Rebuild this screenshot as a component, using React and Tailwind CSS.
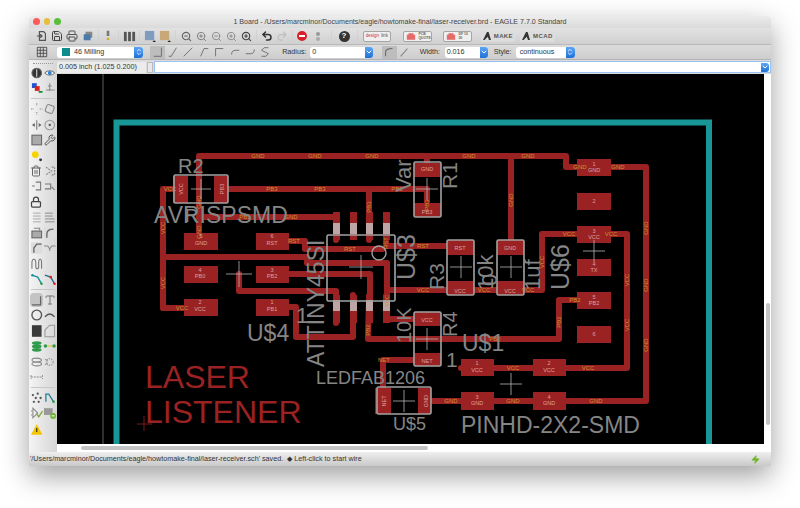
import React from 'react';
import { Printer, Save, Undo2, Redo2, ZoomIn, ZoomOut, Lock, Wrench, Type, Zap, Trash2, ChevronDown, ChevronsUpDown } from 'lucide-react';

const RED = '#9b2222';
const GREY = '#858585';
const OUTLINE = '#a3a3a3';
const ORANGE = '#c9952c';
const PADTEXT = '#d9a3a3';

// copper runs, in screen coordinates
const traces = [
  '199,240 199,156 566,156 566,167 580,167',
  '608,167 646,167 646,401 431,401',
  '163,308 163,189 176,189',
  '163,308 190,308',
  '228,189 427,189 427,210',
  '369,189 369,240',
  '427,156 427,170',
  '511,156 511,245',
  '199,217 336,217 336,240',
  '163,257 307,257 307,263 387,263 387,296',
  '285,241 305,241 305,249 383,249',
  '386,225 386,246 450,246',
  '387,290 542,290 542,234 627,234 627,368 461,368',
  '289,274 370,274 370,296',
  '239,274 239,291 336,291 336,323',
  '289,307 296,307 296,337 353,337 353,295',
  '369,296 368,339 559,339 559,300 580,300',
  '386,296 386,319 416,319',
  '383,388 383,360 416,360',
];

const pads = [
  [173, 176, 15, 27], [214, 176, 14, 27],
  [414, 163, 27, 14], [414, 203, 27, 14],
  [447, 240, 27, 15], [447, 281, 27, 14],
  [497, 240, 27, 15], [497, 281, 27, 14],
  [414, 312, 27, 14], [414, 353, 27, 13],
  [375, 388, 16, 26], [418, 388, 13, 26],
  [184, 233, 34, 17], [256, 233, 33, 17],
  [184, 266, 34, 17], [256, 266, 33, 17],
  [184, 299, 34, 17], [256, 299, 33, 17],
  [577, 159, 34, 17], [577, 193, 34, 17], [577, 226, 34, 17], [577, 259, 34, 17], [577, 292, 34, 17], [577, 326, 34, 17],
  [461, 359, 33, 17], [533, 359, 33, 17], [461, 392, 33, 18], [533, 392, 33, 18],
];

const pins = [
  [333, 212], [350, 212], [366, 212], [383, 212],
  [333, 295], [350, 295], [366, 295], [383, 295],
];

const outlines = [
  [174, 175, 54, 28], [414, 162, 27, 55], [447, 240, 27, 55], [497, 240, 27, 55],
  [414, 312, 27, 54], [377, 387, 54, 27], [327, 235, 68, 66],
];

const crosses = [
  [201, 189, 10], [427, 189, 11], [361, 267, 12], [461, 267, 11], [511, 267, 11], [594, 251, 11],
  [239, 274, 13], [427, 339, 11], [404, 401, 11], [511, 384, 11],
];

// text on copper
const netLabels = [
  [258, 158, 'GND'], [315, 158, 'GND'], [372, 158, 'GND'], [469, 158, 'GND'], [528, 158, 'GND'],
  [580, 169, 'GND'], [618, 169, 'GND'], [170, 191, 'VCC'], [272, 191, 'PB3'], [320, 191, 'PB3'], [397, 191, 'PB3'],
  [245, 219, 'PB3'], [291, 219, 'GND'], [294, 243, 'RST'], [350, 251, 'RST'], [423, 248, 'RST'],
  [423, 292, 'VCC'], [484, 292, 'VCC'], [528, 292, 'VCC'], [569, 236, 'VCC'], [611, 236, 'VCC'], [182, 310, 'VCC'],
  [513, 370, 'VCC'], [588, 370, 'VCC'], [513, 403, 'GND'], [451, 403, 'GND'], [596, 403, 'GND'], [384, 362, 'NET'],
  [495, 341, 'PB2'], [575, 302, 'PB2'],
];
const netLabelsV = [
  [165, 283, 'VCC'], [165, 228, 'VCC'], [201, 232, 'GND'], [201, 202, 'GND'], [371, 207, 'PB3'], [429, 205, 'PB3'],
  [513, 200, 'GND'], [544, 262, 'VCC'], [629, 280, 'VCC'], [648, 228, 'GND'], [648, 285, 'GND'], [648, 345, 'GND'], [629, 325, 'VCC'],
  [561, 322, 'PB2'], [370, 330, 'PB2'], [389, 301, 'VCC'], [388, 243, 'RST'],
];
const padLabels = [
  [201, 238, '5'], [201, 245, 'GND'], [272, 238, '6'], [272, 245, 'RST'], [200, 272, '4'], [200, 278, 'PB0'], [272, 272, '3'], [272, 278, 'PB2'],
  [200, 304, '2'], [200, 311, 'VCC'], [272, 304, '1'], [272, 311, 'PB1'],
  [594, 166, '1'], [594, 172, 'GND'], [594, 203, '2'], [594, 233, '3'], [594, 239, 'VCC'], [594, 266, '4'], [594, 272, 'TX'],
  [594, 299, '5'], [594, 305, 'PB2'], [594, 336, '6'],
  [477, 365, '1'], [477, 372, 'VCC'], [549, 365, '2'], [549, 372, 'VCC'], [477, 399, '3'], [477, 405, 'GND'], [549, 399, '4'], [549, 405, 'GND'],
  [427, 171, 'GND'], [427, 214, 'PB3'], [460, 250, 'RST'], [460, 293, 'VCC'], [510, 250, 'GND'], [510, 293, 'VCC'], [427, 322, 'VCC'], [427, 363, 'NET'],
];
const padLabelsV = [
  [183, 189, 'VCC'], [224, 189, 'PB3'], [386, 401, 'NET'], [428, 401, 'GND'],
];

// package names, rotated ones have r = -90
const names = [
  [178, 173, 20, 0, 'R2'], [154, 223, 23, 0, 'AVRISPSMD'], [185, 222, 18, 0, 'R'], [247, 341, 23, 0, 'U$4'], [296, 323, 22, 0, '1'],
  [316, 384, 18, 0, 'LEDFAB1206'], [462, 351, 23, 0, 'U$1'], [446, 367, 21, 0, '1'], [393, 430, 18, 0, 'U$5'], [461, 433, 23, 0, 'PINHD-2X2-SMD'],
  [411, 192, 22, -90, 'Var'], [457, 189, 21, -90, 'R1'], [415, 280, 25, -90, 'U$3'], [444, 290, 21, -90, 'R3'],
  [493, 290, 22, -90, '10k'], [497, 286, 22, -90, '0'], [540, 290, 22, -90, '1uf'], [569, 290, 25, -90, 'U$6'],
  [324, 367, 23, -90, 'ATTINY45SI'], [411, 343, 20, -90, '10K'], [457, 337, 20, -90, 'R4'],
];

function Board() {
  return (
    <svg viewBox="57 74 707 370" className="block w-[707px] h-[370px] bg-black" fontFamily="Liberation Sans, sans-serif">
      <path d="M116.5 444V122.5H709V444" fill="none" stroke="#199797" strokeWidth="6" />
      <path d="M103 74V444" stroke="#5e5e5e" strokeWidth="1" />

      {traces.map((t) => (
        <polyline key={t} points={t} fill="none" stroke={RED} strokeWidth="6" strokeLinejoin="round" strokeLinecap="round" />
      ))}
      {pads.map(([x, y, w, h]) => (
        <rect key={`${x}-${y}`} x={x} y={y} width={w} height={h} fill={RED} />
      ))}
      {pins.map(([x, y]) => (
        <g key={`${x}-${y}`}>
          <rect x={x} y={y} width="7" height="28" fill={RED} />
          <rect x={x} y={y === 212 ? 223 : 300} width="7" height="11" fill="#bfa6a6" />
        </g>
      ))}

      {netLabels.map(([x, y, t]) => (
        <text key={`${x}-${y}`} x={x} y={y} fontSize="6" fill={ORANGE} textAnchor="middle">{t}</text>
      ))}
      {netLabelsV.map(([x, y, t]) => (
        <text key={`${x}-${y}`} x={x} y={y} fontSize="6" fill={ORANGE} textAnchor="middle" transform={`rotate(-90 ${x} ${y})`}>{t}</text>
      ))}
      {padLabels.map(([x, y, t]) => (
        <text key={`${x}-${y}-${t}`} x={x} y={y} fontSize="5.5" fill={PADTEXT} textAnchor="middle">{t}</text>
      ))}
      {padLabelsV.map(([x, y, t]) => (
        <text key={`${x}-${y}`} x={x} y={y} fontSize="5.5" fill={PADTEXT} textAnchor="middle" transform={`rotate(-90 ${x} ${y})`}>{t}</text>
      ))}

      {outlines.map(([x, y, w, h]) => (
        <rect key={`${x}-${y}`} x={x} y={y} width={w} height={h} rx="1.5" fill="none" stroke={OUTLINE} strokeWidth="1.6" />
      ))}
      <circle cx="379" cy="253" r="7" fill="none" stroke={OUTLINE} strokeWidth="1.4" />
      {crosses.map(([x, y, s]) => (
        <path key={`${x}-${y}`} d={`M${x - s} ${y}H${x + s}M${x} ${y - s}V${y + s}`} stroke="#b5b5b5" strokeWidth="0.8" />
      ))}

      {names.map(([x, y, s, r, t]) => (
        <text key={t + x} x={x} y={y} fontSize={s} fill={GREY} transform={r ? `rotate(${r} ${x} ${y})` : undefined}>{t}</text>
      ))}

      <text x="145" y="388" fontSize="32" fill={RED}>LASER</text>
      <text x="145" y="423" fontSize="32" fill={RED}>LISTENER</text>
      <path d="M137 424H152M144 416V431" stroke={RED} strokeWidth="0.8" />
    </svg>
  );
}

// little hand drawn glyphs for the EAGLE tool buttons
const I = ({ children, size = 14 }) => (
  <svg viewBox="0 0 14 14" width={size} height={size} fill="none" stroke="#666" strokeWidth="1.1">{children}</svg>
);

const sideIcons = {
  info: <I><circle cx="7" cy="7" r="5" fill="#333" /><path d="M7 3v8" stroke="#ddd" /></I>,
  eye: <I><path d="M2 7c2-3 8-3 10 0-2 3-8 3-10 0z" fill="#fff" stroke="#777" /><circle cx="7" cy="7" r="2" fill="#2b7fd4" stroke="none" /></I>,
  layers: <I><rect x="2" y="2" width="5" height="5" fill="#2255cc" stroke="none" /><rect x="5" y="5" width="5" height="5" fill="#d22" stroke="none" /><path d="M9 11h4" stroke="#183" strokeWidth="2" /></I>,
  mark: <I><path d="M7 2v8M3 9h9M5 5h4" stroke="#888" /></I>,
  move: <I><path d="M7 1v3M7 10v3M1 7h3M10 7h3" stroke="#888" strokeDasharray="1.5 1" /></I>,
  rotate: <I><rect x="3" y="3" width="8" height="8" rx="2" transform="rotate(20 7 7)" stroke="#888" /></I>,
  mirror: <I><path d="M7 2v10" stroke="#777" /><path d="M5 5v4L2 7zM9 5v4l3-2z" fill="#666" stroke="none" /></I>,
  target: <I><circle cx="7" cy="7" r="5" stroke="#999" /><circle cx="7" cy="7" r="1.2" fill="#555" stroke="none" /></I>,
  square: <I><rect x="2" y="2" width="10" height="10" fill="#aaa" stroke="#666" /></I>,
  wrench: <Wrench size={12} color="#555" />,
  yellow: <I><circle cx="5.5" cy="5.5" r="3.5" fill="#f5d400" stroke="none" /><circle cx="11" cy="11" r="1.5" fill="#333" stroke="none" /></I>,
  trash: <Trash2 size={12} color="#666" />,
  cut: <I><path d="M3 3l6 4-6 4M9 3h3v8H9" stroke="#888" strokeDasharray="2 1" /></I>,
  copy: <I><path d="M2 7h3M6 3h5v8H6" stroke="#777" /></I>,
  paste: <I><path d="M2 5h6v5H2M9 8l3 3" stroke="#777" /></I>,
  lock: <Lock size={12} color="#444" strokeWidth={2.5} />,
  textA: <I><path d="M3 3h8M3 6h8M3 9h8M3 12h8" stroke="#aaa" strokeWidth="1" /></I>,
  textB: <I><path d="M2 3h8M2 6h8M2 9h10M2 12h10" stroke="#888" strokeWidth="1" /></I>,
  win: <I><rect x="2" y="5" width="10" height="7" fill="#aaa" stroke="#666" /><path d="M4 2h6v3" stroke="#888" /></I>,
  curve: <I><rect x="1" y="1" width="12" height="12" fill="#ddd" stroke="none" /><path d="M4 12V8q0-5 7-5" stroke="#666" strokeWidth="1.4" /></I>,
  miter: <I><rect x="1" y="1" width="12" height="12" fill="#ddd" stroke="none" /><path d="M4 12V7l3-4h5" stroke="#666" strokeWidth="1.4" /></I>,
  split: <I><path d="M1 5h4l2 3 2-3h4M7 8v2" stroke="#888" /></I>,
  wave: <I><path d="M2 12V6q0-4 2-4t2 4v3q0 3 1.5 3T9 9V6q0-4 1.5-4T12 6v6" stroke="#777" /></I>,
  route: <I><path d="M2 3l6 2 4 7" stroke="#1b8f9a" strokeWidth="1.4" /><circle cx="2.5" cy="3" r="1.3" fill="#1b8f9a" stroke="none" /><circle cx="12" cy="12" r="1.3" fill="#2a9a3a" stroke="none" /></I>,
  routeRed: <I><path d="M2 3l6 2 4 7" stroke="#1b6f9a" strokeWidth="1.4" /><circle cx="8" cy="5" r="1.4" fill="#d22" stroke="none" /><circle cx="12" cy="12" r="1.3" fill="#d22" stroke="none" /></I>,
  wire: <I><path d="M2 12h9V3" stroke="#666" strokeWidth="1.3" /></I>,
  t: <Type size={12} color="#777" />,
  circle: <I><circle cx="7" cy="7" r="5" stroke="#555" strokeWidth="1.4" /></I>,
  arc: <I><path d="M2 9q5-6 10 0" stroke="#555" strokeWidth="1.4" /></I>,
  fill: <I><rect x="2" y="1" width="10" height="12" fill="#3a3a3a" stroke="none" /></I>,
  poly: <I><path d="M2 13V6l5-5h5v12z" stroke="#999" /></I>,
  via: <I><ellipse cx="7" cy="4" rx="5" ry="2" fill="#2e9a4a" stroke="none" /><ellipse cx="7" cy="7.5" rx="5" ry="2" fill="#2e9a4a" stroke="none" /><ellipse cx="7" cy="11" rx="5" ry="2" fill="#2e9a4a" stroke="none" /></I>,
  signal: <I><path d="M2 7h10" stroke="#e0c020" /><circle cx="2.5" cy="7" r="1.8" fill="#2e9a4a" stroke="none" /><circle cx="11.5" cy="7" r="1.8" fill="#2e9a4a" stroke="none" /></I>,
  stack: <I><ellipse cx="7" cy="5" rx="5" ry="2" stroke="#888" /><ellipse cx="7" cy="9" rx="5" ry="2" stroke="#888" /></I>,
  hole: <I><circle cx="7" cy="7" r="3.5" stroke="#999" strokeDasharray="1.5 1" /><path d="M2 4l3 2M2 10l3-2" stroke="#999" /></I>,
  dim: <I><path d="M1 7h12M1 5v4M13 5v4" stroke="#888" strokeDasharray="2 1" strokeWidth="1" /></I>,
  ratsnest: <I><circle cx="3" cy="4" r="1.2" fill="#555" stroke="none" /><circle cx="8" cy="2.5" r="1.2" fill="#555" stroke="none" /><circle cx="6" cy="7" r="1.2" fill="#555" stroke="none" /><circle cx="11" cy="7" r="1.2" fill="#555" stroke="none" /><circle cx="4" cy="11" r="1.2" fill="#555" stroke="none" /><circle cx="9" cy="11" r="1.2" fill="#555" stroke="none" /></I>,
  auto: <I><path d="M3 11V3h3l5 8" stroke="#1b7f9a" strokeWidth="1.3" /><circle cx="11" cy="11" r="1.3" fill="#2a9a3a" stroke="none" /></I>,
  check: <I><path d="M3 2l5 5-5 5zM2 5H1M2 9H1" stroke="#888" /><path d="M7 8l2 3 4-6" stroke="#7aa52a" strokeWidth="1.3" /></I>,
  errors: <I><rect x="1" y="2" width="9" height="7" fill="#999" stroke="none" /><circle cx="10.5" cy="10" r="3" fill="#6fb52a" stroke="none" /><path d="M9 10h3" stroke="#fff" /></I>,
  warn: <I><path d="M7 2l6 11H1z" fill="#f5c400" stroke="none" /><path d="M7 6v4" stroke="#222" /></I>,
};

const sideTop = [['info', 'eye'], ['layers', 'mark']];
const sideEdit = [
  ['move', 'rotate'], ['mirror', 'target'], ['square', 'wrench'], ['yellow', null], ['trash', 'cut'], ['copy', 'paste'],
  ['lock', null], ['textA', 'textB'], ['win', 'curve'], ['miter', 'split'], ['wave', null], ['route', 'routeRed'],
];
const sideDraw = [['wire', 't'], ['circle', 'arc'], ['fill', 'poly'], ['via', 'signal'], ['stack', 'hole'], ['dim', null]];
const sideTools = [['ratsnest', 'auto'], ['check', 'errors'], ['warn', null]];

function SideGroup({ rows }) {
  return rows.map((row, i) => (
    <div key={i} className="flex h-[15.45px] items-center pl-[0.5px]">
      {row.map((name, j) => (
        <div key={j} className={`flex w-[13.5px] h-[14px] items-center justify-center ${name === 'wire' ? 'bg-[#c4c4c4] rounded-sm' : ''}`}>
          {name && sideIcons[name]}
        </div>
      ))}
    </div>
  ));
}

const SideRule = () => <div className="mx-[2px] my-[2.2px] h-px shrink-0 bg-[#c6c6c6]" />;

function Sidebar() {
  return (
    <div className="relative flex h-full w-[28px] shrink-0 flex-col bg-gradient-to-r from-[#f4f4f4] to-[#d6d6d6] pt-[5.3px]">
      <div className="absolute left-[4px] top-[3px] h-px w-[20px] border-t border-dotted border-[#999]" />
      <SideGroup rows={sideTop} />
      <SideRule />
      <SideGroup rows={sideEdit} />
      <SideRule />
      <SideGroup rows={sideDraw} />
      <SideRule />
      <SideGroup rows={sideTools} />
    </div>
  );
}

const Tool = ({ children, className = '' }) => (
  <div className={`flex h-[15px] w-[15px] shrink-0 items-center justify-center ${className}`}>{children}</div>
);

const Sep = ({ className }) => <div className={`h-[13px] w-px shrink-0 bg-[#d2d2d2] ${className}`} />;

const Stepper = () => (
  <div className="flex h-full w-[9px] items-center justify-center rounded-r-[3px] bg-gradient-to-b from-[#5aa6f5] to-[#1e70d8]">
    <ChevronsUpDown size={8} color="#fff" strokeWidth={2.5} />
  </div>
);

const Combo = () => (
  <div className="flex h-full w-[8px] items-center justify-center rounded-r-[3px] bg-gradient-to-b from-[#5aa6f5] to-[#1e70d8]">
    <ChevronDown size={8} color="#fff" strokeWidth={3} />
  </div>
);

const RoundBtn = ({ className, children }) => (
  <div className={`flex h-[11px] shrink-0 items-center justify-center gap-[2px] rounded-[2px] border border-[#a5a5a5] bg-[#efefef] ${className}`}>{children}</div>
);

const AutodeskBtn = ({ className, label }) => (
  <div className={`flex h-[11px] shrink-0 items-center justify-center gap-[3px] rounded-[2px] bg-[#dcdcdc] text-[6px] font-bold tracking-[0.4px] text-[#555] ${className}`}>
    <svg viewBox="0 0 10 10" width="8" height="8"><path d="M0 10 5 0h2l3 10H7.500L6 6 2 10z" fill="#333" /></svg>
    {label}
  </div>
);

const Chip = () => (
  <svg viewBox="0 0 12 10" width="10" height="9"><path d="M1 3h2V1h6v2h2v6H1z" fill="#e56a6a" /></svg>
);

function MainToolbar() {
  return (
    <div className="flex h-[17px] shrink-0 items-center border-b border-[#b9b9b9] bg-gradient-to-b from-[#e2e2e2] to-[#d0d0d0] pl-[5.5px]">
      <Tool><svg viewBox="0 0 14 14" width="12" height="12" fill="none" stroke="#555" strokeWidth="1.4"><path d="M4 2h5l2 2v8H4zM1 7h6M5 5l2 2-2 2" /></svg></Tool>
      <Tool><Save size={12} color="#444" strokeWidth={2} /></Tool>
      <Tool><Printer size={12} color="#555" strokeWidth={2} /></Tool>
      <Tool className="ml-px"><svg viewBox="0 0 14 14" width="12" height="12"><rect x="4" y="2" width="8" height="7" fill="#888" /><rect x="2" y="5" width="8" height="7" fill="#4a7aa8" /></svg></Tool>
      <Sep className="mx-[2px]" />
      <Tool><svg viewBox="0 0 14 14" width="12" height="12"><path d="M5.5 1h3v6h-3z" fill="#777" /><circle cx="7" cy="10.5" r="1.6" fill="#d5a82c" /></svg></Tool>
      <Sep className="mx-[2.5px]" />
      <Tool><svg viewBox="0 0 14 14" width="13" height="13" fill="#555"><rect x="1" y="2" width="3" height="10" /><rect x="5.5" y="2" width="3" height="10" /><rect x="10" y="2" width="3" height="10" /></svg></Tool>
      <Sep className="mx-[2.5px]" />
      <Tool><svg viewBox="0 0 14 14" width="13" height="13"><rect x="1" y="1" width="10" height="10" fill="#7f9bbd" /><path d="M9 13h4l-2-2z" fill="#222" /></svg></Tool>
      <Tool><svg viewBox="0 0 14 14" width="13" height="13"><rect x="1" y="1" width="10" height="10" fill="#c9a878" /><path d="M9 13h4l-2-2z" fill="#222" /></svg></Tool>
      <Sep className="mx-[2.5px]" />
      <Tool><ZoomOut size={11} color="#666" strokeWidth={2.5} /></Tool>
      <Tool><ZoomIn size={11} color="#777" strokeWidth={2} /></Tool>
      <Tool><ZoomOut size={11} color="#888" strokeWidth={2} /></Tool>
      <Tool><ZoomIn size={11} color="#888" strokeWidth={2} /></Tool>
      <Tool><ZoomIn size={11} color="#444" strokeWidth={2.5} /></Tool>
      <Sep className="mx-[2.5px]" />
      <Tool><Undo2 size={12} color="#333" strokeWidth={3} /></Tool>
      <Tool><Redo2 size={12} color="#c0c0c0" strokeWidth={2.5} /></Tool>
      <Sep className="mx-[2px]" />
      <Tool>
        <div className="flex h-[10px] w-[10px] items-center justify-center rounded-full bg-[#d8202a]"><div className="h-[2px] w-[6px] bg-white" /></div>
      </Tool>
      <Tool className="ml-px flex-col gap-[1px]">
        <div className="h-[4px] w-[4px] rounded-full bg-[#999]" />
        <div className="h-[4px] w-[4px] rounded-full bg-[#aaa]" />
      </Tool>
      <Sep className="mx-[5px]" />
      <Tool>
        <div className="flex h-[11px] w-[11px] items-center justify-center rounded-full bg-[#333] text-[8px] font-bold leading-none text-white">?</div>
      </Tool>
      <Sep className="mx-[5.2px]" />
      <RoundBtn className="w-[28px] text-[4.5px] leading-none text-[#c33]">design<span className="text-[#555]">link</span></RoundBtn>
      <RoundBtn className="ml-[12px] w-[29px]">
        <Chip />
        <span className="w-[10px] text-[3.5px] font-bold leading-[4px] text-[#666]">PCB QUOTE</span>
      </RoundBtn>
      <RoundBtn className="ml-[11px] w-[29px]">
        <Chip />
        <span className="w-[10px] text-[3.5px] font-bold leading-[4px] text-[#666]">DF 10 30</span>
      </RoundBtn>
      <AutodeskBtn className="ml-[9px] w-[34px]" label="MAKE" />
      <AutodeskBtn className="ml-[5px] w-[35px]" label="MCAD" />
    </div>
  );
}

const wireBends = [
  'M2 12h9V2', 'M2 12h3l6-10', 'M2 12 12 2', 'M3 12 7 3h5', 'M3 12V3h9', 'M3 10q0-5 5-5h4', 'M2 9h6q4 0 4-5', 'M11 2H6L3 5l8 4-3 3H3',
];

function WireToolbar() {
  return (
    <div className="flex h-[15px] shrink-0 items-center border-b border-[#b3b3b3] bg-gradient-to-b from-[#dcdcdc] to-[#cdcdcd] pl-[6px] text-[7.2px] text-[#333]">
      <svg viewBox="0 0 14 14" width="14" height="12" fill="none" stroke="#444"><path d="M1.5 1.5h11v11h-11zM1.500 5h11M1.500 8.500h11M5 1.500v11M8.500 1.500v11" /></svg>
      <div className="ml-[8px] flex h-[11px] w-[86px] items-center rounded-[3px] bg-white pl-[5px]">
        <div className="h-[8px] w-[8px] bg-[#0f8c8c]" />
        <span className="ml-[4px] flex-1">46 Milling</span>
        <Stepper />
      </div>
      <div className="ml-[7px] flex">
        {wireBends.map((d, i) => (
          <div key={d} className={`flex h-[13px] w-[15.4px] items-center justify-center ${i === 0 ? 'bg-[#bdbdbd]' : ''}`}>
            <svg viewBox="0 0 14 14" width="12" height="12" fill="none" stroke="#666" strokeWidth="1"><path d={d} /></svg>
          </div>
        ))}
      </div>
      <span className="ml-[9px] w-[28px] shrink-0">Radius:</span>
      <div className="flex h-[11px] w-[63px] items-center rounded-[3px] bg-white pl-[2px]">
        <span className="flex-1">0</span>
        <Combo />
      </div>
      <div className="ml-[8.5px] flex">
        <div className="flex h-[13px] w-[15px] items-center justify-center bg-[#bdbdbd]">
          <svg viewBox="0 0 14 14" width="12" height="12" fill="none" stroke="#666" strokeWidth="1.2"><path d="M3 12V7q0-4 8-4" /></svg>
        </div>
        <div className="flex h-[13px] w-[15px] items-center justify-center">
          <svg viewBox="0 0 14 14" width="12" height="12" fill="none" stroke="#888" strokeWidth="1.2"><path d="M3 12 11 3" /></svg>
        </div>
      </div>
      <span className="ml-[8px] w-[25px] shrink-0">Width:</span>
      <div className="flex h-[11px] w-[43px] items-center rounded-[3px] bg-white pl-[2px]">
        <span className="flex-1">0.016</span>
        <Combo />
      </div>
      <span className="ml-[6px] w-[22px] shrink-0">Style:</span>
      <div className="flex h-[11px] w-[59px] items-center rounded-[3px] bg-white pl-[4px]">
        <span className="flex-1">continuous</span>
        <Stepper />
      </div>
    </div>
  );
}

function CommandRow() {
  return (
    <div className="flex h-[14px] shrink-0 items-center bg-[#dcdcdc] text-[7.2px] text-[#333]">
      <div className="flex h-[11px] w-[89px] shrink-0 items-center bg-[#ececec] pl-[2px]">0.005 inch (1.025 0.200)</div>
      <div className="ml-[1px] h-[11px] w-[6px] shrink-0 border border-[#bbb] bg-[#e8e8e8]" />
      <div className="ml-[1px] flex h-[12px] flex-1 items-center justify-end border border-[#9cc3f0] bg-white pr-[1px]">
        <div className="h-[9px]"><Combo /></div>
      </div>
    </div>
  );
}

export default function App() {
  return (
    <div className="h-[508px] w-[800px] overflow-hidden bg-white pl-[29px] pt-[16px] font-['Liberation_Sans',sans-serif]">
      <div className="flex h-[450px] w-[742px] flex-col overflow-hidden rounded-t-[4px] shadow-[0_10px_28px_rgba(0,0,0,0.38)]">
        {/* Title bar */}
        <div className="relative flex h-[12px] shrink-0 items-center justify-center bg-gradient-to-b from-[#ececec] to-[#dadada] text-[7.1px] text-[#444]">
          <div className="absolute left-[4px] top-[2px] flex gap-[4px]">
            <div className="h-[6.5px] w-[6.5px] rounded-full bg-[#fc5b57]" />
            <div className="h-[6.5px] w-[6.5px] rounded-full bg-[#e5bf3c]" />
            <div className="h-[6.5px] w-[6.5px] rounded-full bg-[#57c038]" />
          </div>
          1 Board - /Users/marcminor/Documents/eagle/howtomake-final/laser-receiver.brd - EAGLE 7.7.0 Standard
        </div>
        <MainToolbar />
        <WireToolbar />

        <div className="flex h-[392px] shrink-0">
          <Sidebar />
          <div className="flex w-[714px] flex-col bg-white">
            <CommandRow />
            <div className="flex">
              <Board />
              <div className="flex flex-1 justify-center pl-px">
                <div className="mt-[229px] h-[122px] w-[4px] rounded-full bg-[#c4c4c4]" />
              </div>
            </div>
            <div className="flex h-[8px] items-center pl-[24px]">
              <div className="h-[4px] w-[347px] rounded-full bg-[#c4c4c4]" />
            </div>
          </div>
        </div>

        {/* Status bar */}
        <div className="flex h-[14px] shrink-0 items-center justify-between bg-gradient-to-b from-[#efefef] to-[#c9c9c9] pl-[1px] pr-[11px] text-[7.2px] text-[#333]">
          <span>'/Users/marcminor/Documents/eagle/howtomake-final/laser-receiver.sch' saved.&nbsp; ◆ Left-click to start wire</span>
          <Zap size={9} color="#6fb52a" fill="#6fb52a" />
        </div>
      </div>
    </div>
  );
}
